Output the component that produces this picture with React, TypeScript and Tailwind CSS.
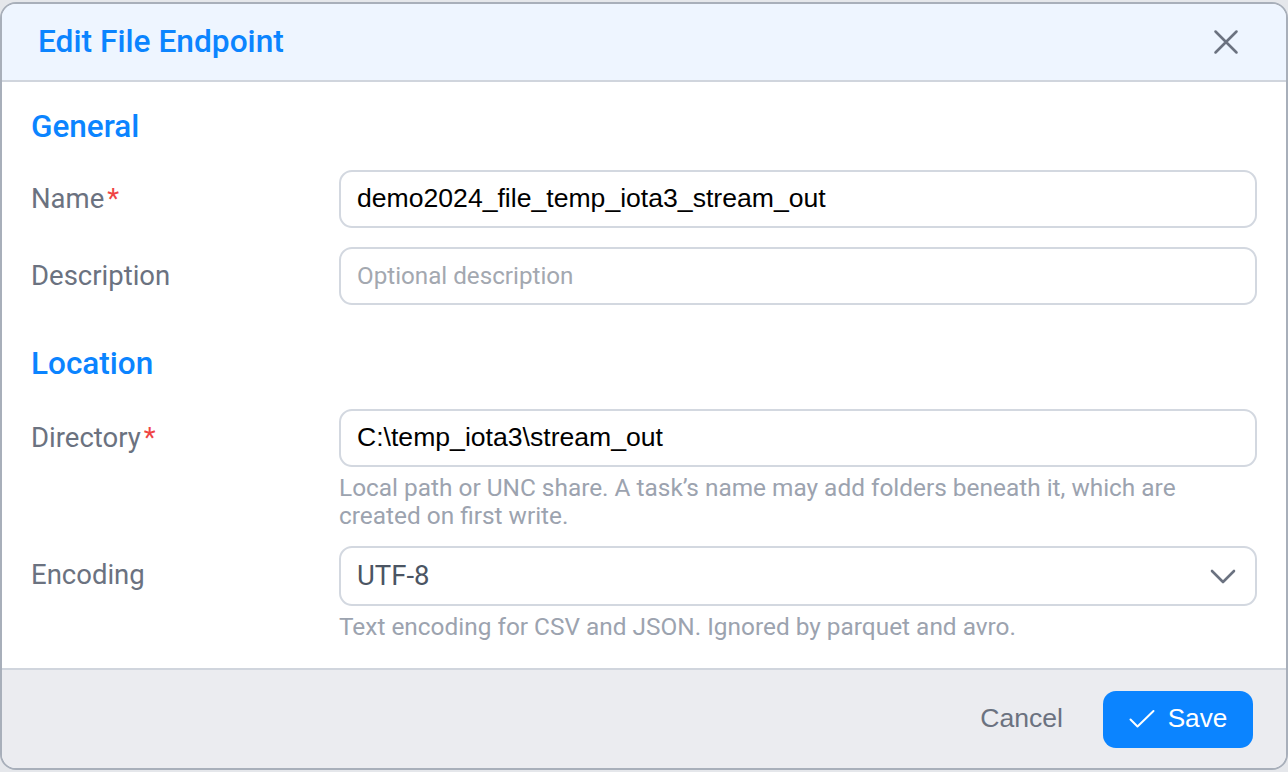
import { ReactNode } from "react";

const sans = "font-['Roboto','Liberation_Sans',sans-serif]";
const arial = "font-['Liberation_Sans',Arial,sans-serif]";

const Field = ({ label, required, hint, children }: { label: string; required?: boolean; hint?: string; children: ReactNode }) => (
  <div className="grid grid-cols-[308px_1fr] items-start">
    <div className="flex h-[58px] items-center text-[27.5px] text-[#6b7280]">
      {label}
      {required && <span className="ml-[3px] text-[#ef4444]">*</span>}
    </div>
    <div>
      {children}
      {hint && <p className="mt-[7px] pr-20 text-[24.4px] leading-[28px] text-[#9ca3af]">{hint}</p>}
    </div>
  </div>
);

const TextBox = ({ value, placeholder }: { value?: string; placeholder?: string }) => (
  <div className="flex h-[58px] items-center rounded-[13px] border-2 border-[#d3d8e0] bg-white px-4">
    {value ? (
      <span className={`${arial} text-[26.6px] text-black`}>{value}</span>
    ) : (
      <span className="text-[24.2px] text-[#a3a8b0]">{placeholder}</span>
    )}
  </div>
);

export default function App() {
  return (
    <div className={`${sans} h-[772px] w-full bg-[#e5e7eb] px-0 pt-[2px] pb-[2px]`}>
      <div className="flex h-full flex-col overflow-hidden rounded-[16px] border-2 border-[#a8afba] bg-white">
        {/* header */}
        <div className="flex h-[78px] shrink-0 items-center justify-between border-b-2 border-[#d0d5dd] bg-[#eef5ff] pl-[36px] pr-[46px]">
          <h1 className="text-[31.7px] font-medium text-[#0b84ff]">Edit File Endpoint</h1>
          <svg width="28" height="28" viewBox="0 0 24 24" fill="none" stroke="#6b7280" strokeWidth="2.2" strokeLinecap="round">
            <path d="M3 3l18 18M21 3L3 21" />
          </svg>
        </div>

        {/* body */}
        <div className="flex-1 px-[29px] pt-[27px]">
          <h2 className="mb-[25px] text-[31.5px] font-medium leading-[36px] text-[#0b84ff]">General</h2>
          <div className="flex flex-col gap-[19px]">
            <Field label="Name" required>
              <TextBox value="demo2024_file_temp_iota3_stream_out" />
            </Field>
            <Field label="Description">
              <TextBox placeholder="Optional description" />
            </Field>
          </div>

          <h2 className="mt-[41px] mb-[27px] text-[31.5px] font-medium leading-[36px] text-[#0b84ff]">Location</h2>
          <div className="flex flex-col gap-[16px]">
            <Field
              label="Directory"
              required
              hint="Local path or UNC share. A task’s name may add folders beneath it, which are created on first write."
            >
              <TextBox value="C:\temp_iota3\stream_out" />
            </Field>
            <Field label="Encoding" hint="Text encoding for CSV and JSON. Ignored by parquet and avro.">
              <div className="flex h-[60px] items-center justify-between rounded-[13px] border-2 border-[#d3d8e0] bg-white pl-4 pr-[19px]">
                <span className="text-[27.5px] text-[#4b5563]">UTF-8</span>
                <svg width="26" height="16" viewBox="0 0 26 16" fill="none" stroke="#6b7280" strokeWidth="2.6" strokeLinecap="round" strokeLinejoin="round">
                  <path d="M2 3l11 11L24 3" />
                </svg>
              </div>
            </Field>
          </div>
        </div>

        {/* footer */}
        <div className="flex h-[100px] shrink-0 items-center justify-end gap-[24px] border-t-2 border-[#d0d5dd] bg-[#ebecf0] pr-[33px]">
          <button className={`${arial} px-4 text-[26.6px] text-[#6b7280]`}>Cancel</button>
          <button className={`${arial} flex h-[57px] w-[150px] items-center justify-center gap-[13px] rounded-[13px] bg-[#0b84ff] text-[26.2px] text-white`}>
            <svg width="26" height="20" viewBox="0 0 26 20" fill="none" stroke="white" strokeWidth="2" strokeLinecap="round" strokeLinejoin="round">
              <path d="M1.5 10.5l7 7L24.5 2" />
            </svg>
            Save
          </button>
        </div>
      </div>
    </div>
  );
}
